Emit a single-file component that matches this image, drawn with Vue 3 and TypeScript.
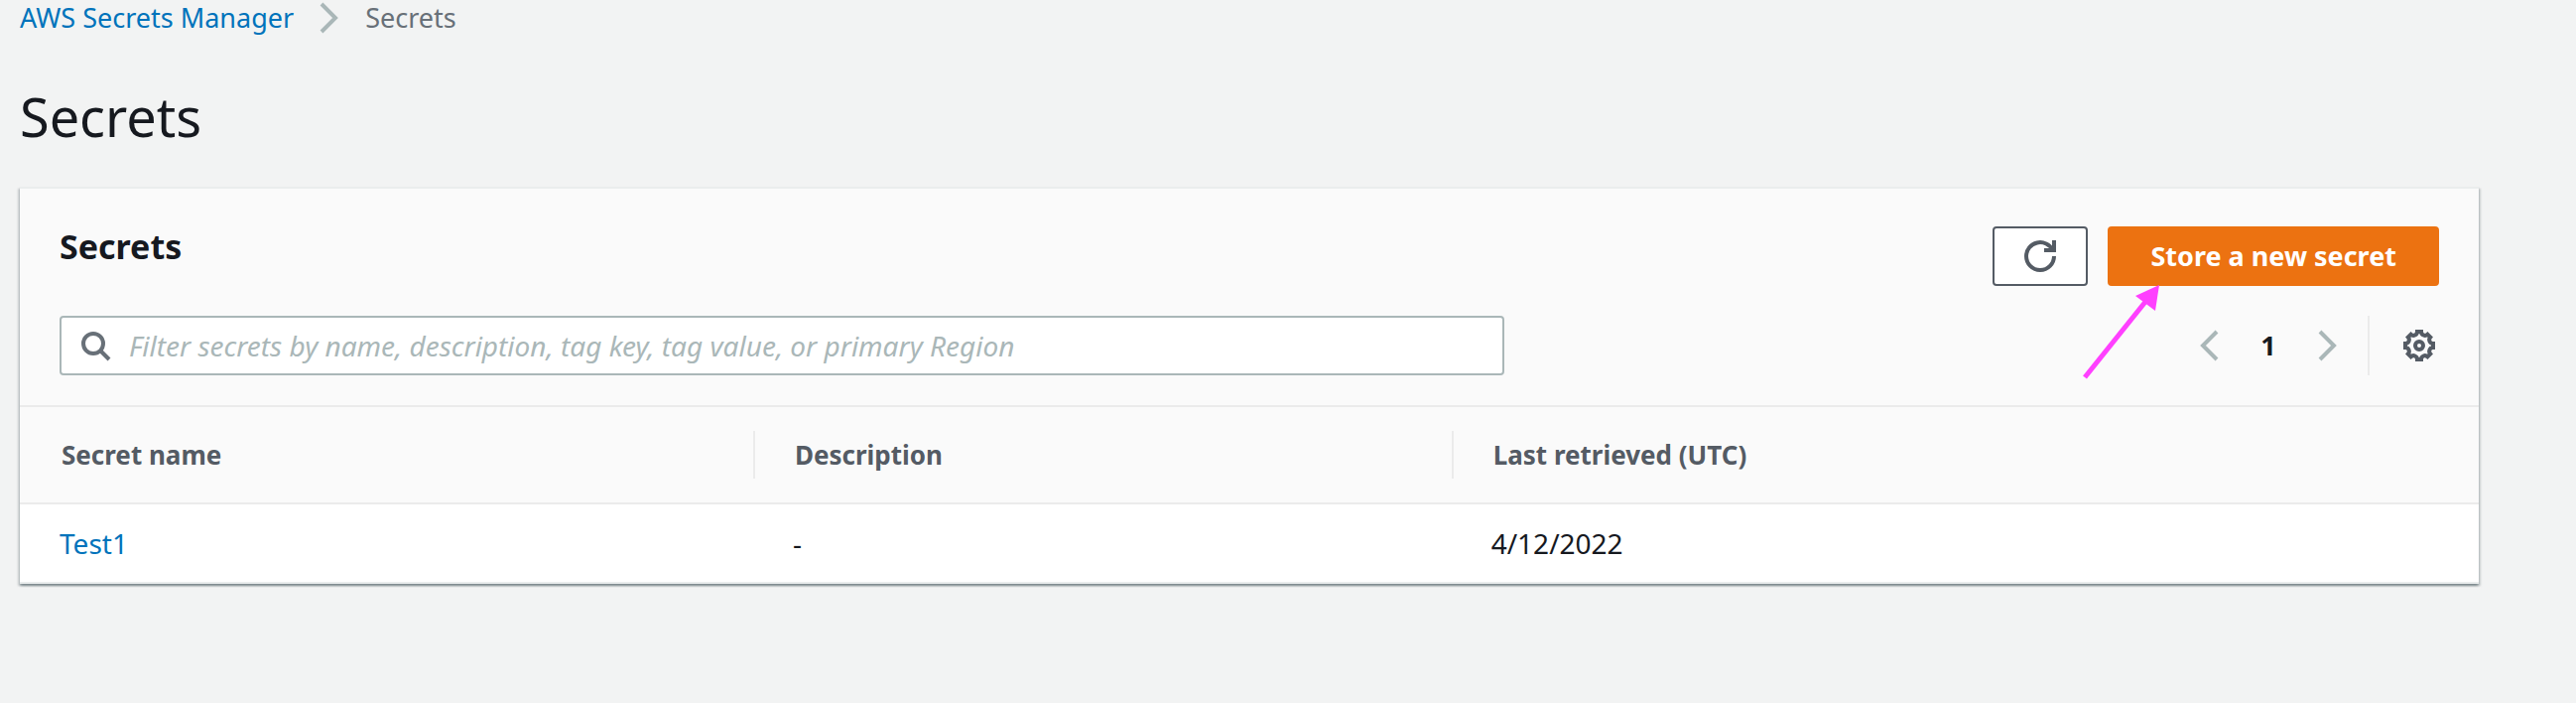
<script setup lang="ts">
import { ref, computed } from 'vue'

interface Secret {
  name: string
  description: string
  lastRetrieved: string
}

const columns: string[] = ['Secret name', 'Description', 'Last retrieved (UTC)']
const secrets = ref<Secret[]>([{ name: 'Test1', description: '-', lastRetrieved: '4/12/2022' }])
const filter = ref('')
const visible = computed(() =>
  secrets.value.filter((s) => s.name.toLowerCase().includes(filter.value.trim().toLowerCase())),
)
</script>

<template>
  <main class="page">
    <nav class="breadcrumb" aria-label="Breadcrumb">
      <a href="#">AWS Secrets Manager</a>
      <svg class="icon muted" viewBox="0 0 16 16" aria-hidden="true"><path d="M4 1l7 7-7 7" /></svg>
      <span>Secrets</span>
    </nav>

    <h1>Secrets</h1>

    <section class="card">
      <header class="card-header">
        <div class="row top">
          <h2>Secrets</h2>
          <div class="actions">
            <button type="button" class="btn refresh" aria-label="Refresh">
              <svg class="icon" viewBox="0 0 16 16" aria-hidden="true">
                <path d="M10 5h5V0" />
                <path d="M15 8a7 7 0 0 1-14 0a7 7 0 0 1 13.300-3" />
              </svg>
            </button>
            <div class="store">
              <button type="button" class="btn primary">Store a new secret</button>
              <svg class="pointer" viewBox="0 0 80 98" aria-hidden="true">
                <path class="shaft" d="M3 94L64 18" />
                <path class="head" d="M78 1L54 12L74 27z" />
              </svg>
            </div>
          </div>
        </div>

        <div class="row">
          <label class="filter">
            <svg class="icon search" viewBox="0 0 16 16" aria-hidden="true">
              <circle cx="7" cy="7" r="5" />
              <path d="M10.500 10.500L15 15" />
            </svg>
            <input
              v-model="filter"
              type="text"
              aria-label="Filter secrets"
              placeholder="Filter secrets by name, description, tag key, tag value, or primary Region"
            />
          </label>
          <div class="paging">
            <button type="button" class="icon-btn" aria-label="Previous page">
              <svg class="icon muted" viewBox="0 0 16 16" aria-hidden="true"><path d="M12 1L5 8l7 7" /></svg>
            </button>
            <button type="button" class="icon-btn number">1</button>
            <button type="button" class="icon-btn" aria-label="Next page">
              <svg class="icon muted" viewBox="0 0 16 16" aria-hidden="true"><path d="M4 1l7 7-7 7" /></svg>
            </button>
            <span class="divider"></span>
            <button type="button" class="icon-btn" aria-label="Preferences">
              <svg class="icon" viewBox="0 0 16 16" aria-hidden="true">
                <path
                  d="M7 1H9A1.900 1.900 0 0 0 12.200 2.400L13.600 3.800A1.900 1.900 0 0 0 15 7V9A1.900 1.900 0 0 0 13.600 12.200L12.200 13.600A1.900 1.900 0 0 0 9 15H7A1.900 1.900 0 0 0 3.800 13.600L2.400 12.200A1.900 1.900 0 0 0 1 9V7A1.900 1.900 0 0 0 2.400 3.800L3.800 2.400A1.900 1.900 0 0 0 7 1z"
                />
                <circle cx="8" cy="8" r="2" />
              </svg>
            </button>
          </div>
        </div>
      </header>

      <table>
        <thead>
          <tr>
            <th v-for="c in columns" :key="c" scope="col">
              <div class="th">{{ c }}</div>
            </th>
          </tr>
        </thead>
        <tbody>
          <tr v-for="s in visible" :key="s.name">
            <td><a href="#">{{ s.name }}</a></td>
            <td>{{ s.description }}</td>
            <td>{{ s.lastRetrieved }}</td>
          </tr>
        </tbody>
      </table>
    </section>
  </main>
</template>

<style>
body {
  margin: 0;
  background: #f2f3f3;
}
</style>

<style scoped>
.page {
  box-sizing: border-box;
  min-height: 100vh;
  padding: 0 98px 40px 20px;
  background: #f2f3f3;
  color: #16191f;
  font-family: "Amazon Ember", "Noto Sans", "Open Sans", sans-serif;
  font-size: 27px;
  line-height: 36px;
}
a {
  color: #0073bb;
  text-decoration: none;
}
button,
input {
  font: inherit;
  color: inherit;
}
.icon {
  display: block;
  flex: none;
  width: 32px;
  height: 32px;
  fill: none;
  stroke: #545b64;
  stroke-width: 2;
}
.icon.muted {
  stroke: #aab7b8;
}
.icon.search {
  stroke: #687078;
}
.breadcrumb {
  display: flex;
  align-items: center;
  gap: 20px;
  color: #687078;
}
h1 {
  margin: 45px 0 35px;
  font-size: 54px;
  line-height: 72px;
  font-weight: 400;
}
.card {
  border-top: 2px solid #eaeded;
  background: #fff;
  box-shadow:
    0 2px 2px 0 rgba(0, 28, 36, 0.3),
    2px 2px 2px 0 rgba(0, 28, 36, 0.15),
    -2px 2px 2px 0 rgba(0, 28, 36, 0.15);
}
.card-header {
  display: flex;
  flex-direction: column;
  gap: 30px;
  padding: 38px 40px 30px;
  border-bottom: 2px solid #ebebeb;
  background: #fafafa;
}
.row {
  display: flex;
  align-items: center;
  justify-content: space-between;
}
.row.top {
  align-items: flex-start;
}
h2 {
  margin: 0;
  font-size: 34px;
  line-height: 40px;
  font-weight: 700;
}
.actions {
  display: flex;
  gap: 20px;
}
.btn {
  display: flex;
  align-items: center;
  justify-content: center;
  box-sizing: border-box;
  height: 60px;
  padding: 0 41px;
  border: 2px solid #545b64;
  border-radius: 4px;
  background: #fff;
  font-weight: 700;
  cursor: pointer;
}
.btn.refresh {
  padding: 0 30px;
}
.btn.primary {
  border-color: #ec7211;
  background: #ec7211;
  color: #fff;
}
.store {
  position: relative;
}
.pointer {
  position: absolute;
  top: 58px;
  left: -26px;
  width: 80px;
  height: 98px;
  pointer-events: none;
}
.shaft {
  fill: none;
  stroke: #ff40ff;
  stroke-width: 5;
}
.head {
  fill: #ff40ff;
}
.filter {
  display: flex;
  align-items: center;
  gap: 18px;
  box-sizing: border-box;
  width: 60.7%;
  height: 60px;
  padding: 0 18px;
  border: 2px solid #aab7b8;
  border-radius: 4px;
  background: #fff;
}
.filter input {
  flex: 1;
  min-width: 0;
  padding: 0;
  border: 0;
  outline: 0;
  background: transparent;
  font-size: 28px;
}
.filter input::placeholder {
  color: #aab7b8;
  font-style: italic;
  opacity: 1;
}
.paging {
  display: flex;
  align-items: center;
  padding-right: 4px;
}
.icon-btn {
  padding: 0;
  border: 0;
  background: none;
  cursor: pointer;
}
.number {
  width: 88px;
  font-weight: 700;
}
.divider {
  width: 2px;
  height: 60px;
  margin: 0 34px 0 24px;
  background: #ebebeb;
}
table {
  width: 100%;
  table-layout: fixed;
  border-collapse: separate;
  border-spacing: 0;
}
th,
td {
  padding: 0 0 0 38px;
  text-align: left;
  box-sizing: border-box;
}
th:first-child,
td:first-child {
  padding-left: 40px;
}
th {
  height: 98px;
  border-bottom: 2px solid #ebebeb;
  background: #fafafa;
  color: #545b64;
  font-size: 26px;
  font-weight: 700;
}
th:nth-child(1) {
  width: 29.9%;
}
th:nth-child(2) {
  width: 28.4%;
}
.th {
  height: 48px;
  padding-left: 2px;
  line-height: 48px;
  border-right: 2px solid #ebebeb;
}
th:last-child .th {
  border-right: 0;
}
td {
  height: 80px;
  border-bottom: 2px solid #eaeded;
  font-size: 28px;
}
</style>
